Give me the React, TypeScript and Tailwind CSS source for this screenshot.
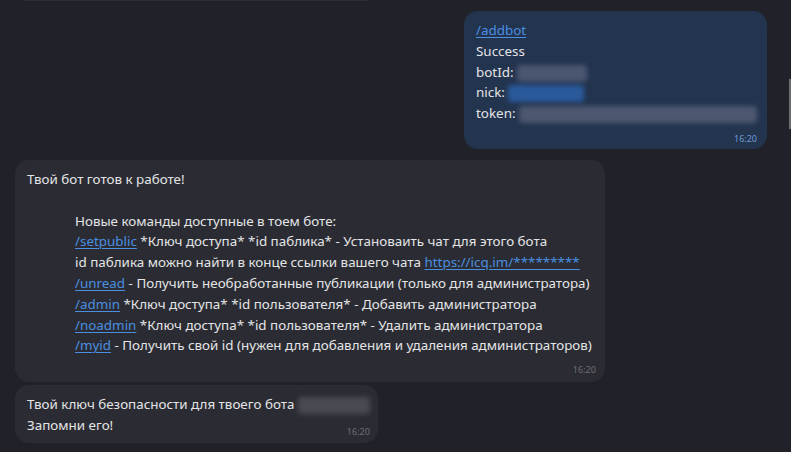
import React from 'react';

const font = { fontFamily: '"Noto Sans", "Open Sans", sans-serif' };

const Blur = ({ className }: { className: string }) => (
  <span className={`inline-block align-middle h-[17px] rounded-sm blur-[2.5px] ${className}`} />
);

const Cmd = ({ children }: { children: React.ReactNode }) => (
  <a className="text-[#4a8fe0] underline underline-offset-2 decoration-1">{children}</a>
);

const commands: { cmd: string; text: React.ReactNode }[] = [
  { cmd: '/setpublic', text: ' *Ключ доступа* *id паблика* - Установаить чат для этого бота' },
  { cmd: '/unread', text: ' - Получить необработанные публикации (только для администратора)' },
  { cmd: '/admin', text: ' *Ключ доступа* *id пользователя* - Добавить администратора' },
  { cmd: '/noadmin', text: ' *Ключ доступа* *id пользователя* - Удалить администратора' },
  { cmd: '/myid', text: ' - Получить свой id (нужен для добавления и удаления администраторов)' },
];

export default function App() {
  return (
    <div
      className="w-[791px] h-[452px] overflow-hidden bg-[#212129] text-[#e4e4e6] text-[13.4px] leading-[20.8px] relative"
      style={font}
    >
      {/* scrollbar */}
      <div className="absolute right-0 top-[79px] w-[2px] h-[50px] bg-[#6b6b72]" />

      <div className="flex flex-col">
        {/* previous message edge */}
        <div className="ml-[23px] w-[345px] h-[1px] bg-[#2d2d35]" />

        {/* outgoing */}
        <div className="flex justify-end pr-[24px] mt-[10px]">
          <div className="bg-[#23344f] rounded-[14px] pl-[12px] pr-[10px] pt-[9px] pb-[3px] whitespace-nowrap">
            <div><Cmd>/addbot</Cmd></div>
            <div>Success</div>
            <div>botId: <Blur className="w-[70px] bg-[#4b5670]" /></div>
            <div>nick: <Blur className="w-[76px] bg-[#2a5a9c]" /></div>
            <div>token: <Blur className="w-[238px] bg-[#4d5870]" /></div>
            <div className="text-right text-[9px] leading-[14px] text-[#6f9ad2] mt-[8px]">16:20</div>
          </div>
        </div>

        {/* incoming: bot ready */}
        <div className="flex pl-[15px] mt-[11px]">
          <div className="bg-[#2b2c33] rounded-[14px] pl-[12px] pr-[9px] pt-[9px] pb-[5px] whitespace-nowrap">
            <div className="pr-[4px]">Твой бот готов к работе!</div>
            <div className="h-[20.8px]" />
            <div className="pl-[48px] pr-[4px]">
              <div>Новые команды доступные в тоем боте:</div>
              <div><Cmd>{commands[0].cmd}</Cmd>{commands[0].text}</div>
              <div>
                id паблика можно найти в конце ссылки вашего чата <Cmd>https://icq.im/*********</Cmd>
              </div>
              {commands.slice(1).map((c) => (
                <div key={c.cmd}><Cmd>{c.cmd}</Cmd>{c.text}</div>
              ))}
            </div>
            <div className="text-right text-[9px] leading-[14px] text-[#6b6c74] mt-[7px]">16:20</div>
          </div>
        </div>

        {/* incoming: key */}
        <div className="flex pl-[15px] mt-[3px]">
          <div className="bg-[#2b2c33] rounded-[14px] pl-[12px] pr-[8px] pt-[9px] pb-[7px] whitespace-nowrap">
            <div>Твой ключ безопасности для твоего бота <Blur className="w-[72px] bg-[#4a4b52]" /></div>
            <div className="flex items-end justify-between">
              <span>Запомни его!</span>
              <span className="text-[9px] leading-[14px] text-[#6b6c74] ml-3 -mb-[3px]">16:20</span>
            </div>
          </div>
        </div>
      </div>
    </div>
  );
}
